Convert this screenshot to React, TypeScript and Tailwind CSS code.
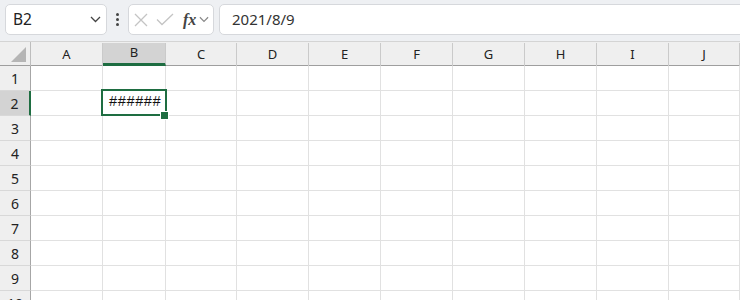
const COLS = ['A', 'B', 'C', 'D', 'E', 'F', 'G', 'H', 'I', 'J'] as const;
const ROWS = [1, 2, 3, 4, 5, 6, 7, 8, 9, 10];

const GRID = 'grid grid-cols-[31px_72px_63px_71px_72px_72px_72px_72px_72px_72px_1fr]';

function Chevron({ className }: { className?: string }) {
  return (
    <svg className={className} width="11" height="7" viewBox="0 0 11 7" fill="none" stroke="currentColor" strokeWidth="1.3">
      <path d="M1 1l4.5 4.5L10 1" />
    </svg>
  );
}

function Toolbar() {
  return (
    <div className="h-[42px] bg-[#eef0f3] border-b border-[#d4d4d4] flex items-start pt-[4px] pl-[5px]">
      <div className="w-[102px] h-[31px] bg-white border border-[#d6d8dc] rounded-[5px] flex items-center pl-[7px] pr-[5px]">
        <span className="flex-1 text-[15.5px] text-[#222] leading-none">B2</span>
        <Chevron className="text-[#444]" />
      </div>
      <div className="w-[21px] h-[31px] flex flex-col items-center justify-center gap-[2px]">
        <span className="w-[3px] h-[3px] bg-[#444] rounded-full" />
        <span className="w-[3px] h-[3px] bg-[#444] rounded-full" />
        <span className="w-[3px] h-[3px] bg-[#444] rounded-full" />
      </div>
      <div className="w-[86px] h-[31px] bg-white border border-[#d6d8dc] rounded-[5px] flex items-center pl-[5px]">
        <svg width="14" height="14" viewBox="0 0 14 14" stroke="#c4c4c4" strokeWidth="1.3" fill="none">
          <path d="M1 1l12 12M13 1L1 13" />
        </svg>
        <svg className="ml-[8px]" width="18" height="13" viewBox="0 0 18 13" stroke="#c4c4c4" strokeWidth="1.3" fill="none">
          <path d="M1 6.5l5 5L17 1" />
        </svg>
        <span className="ml-[9px] font-['Liberation_Serif',serif] italic font-bold text-[16px] text-[#444] leading-none">fx</span>
        <Chevron className="ml-[3px] text-[#888] w-[10px]" />
      </div>
      <div className="flex-1 -mr-[8px] ml-[5px] h-[31px] bg-white border border-[#d6d8dc] rounded-[5px] flex items-center pl-[12px]">
        <span className="text-[15px] text-[#333] leading-none">2021/8/9</span>
      </div>
    </div>
  );
}

function HeaderRow() {
  return (
    <div className={`${GRID} h-[24px] bg-[#efefef] border-b border-[#9e9e9e]`}>
      <div className="relative border-r border-[#bdbdbd]">
        <span className="absolute left-[11px] top-[5px] w-0 h-0 border-l-[15px] border-l-transparent border-b-[15px] border-b-[#b5b5b5]" />
      </div>
      {COLS.map((c) => (
        <div
          key={c}
          className={`flex items-center justify-center text-[13px] text-[#222] border-r border-[#cacaca] mt-[1px] ${
            c === 'B' ? 'bg-[#d3d3d3] border-b-[3px] border-b-[#1e6d41]' : ''
          }`}
        >
          {c}
        </div>
      ))}
    </div>
  );
}

function Row({ n }: { n: number }) {
  const sel = n === 2;
  return (
    <div className={`${GRID} h-[25px]`}>
      <div
        className={`flex items-center justify-center text-[14px] text-[#222] border-b border-[#d8d8d8] ${
          sel ? 'bg-[#d3d3d3] border-r-[2px] border-r-[#1e6d41]' : 'bg-[#efefef] border-r border-r-[#a6a6a6]'
        }`}
      >
        {n}
      </div>
      {COLS.map((c) => (
        <div key={c} className="relative border-r border-b border-[#e1e1e1]">
          {sel && c === 'B' && (
            <>
              <div className="absolute z-10 -left-[2px] -top-[2px] w-[66px] h-[27px] border-2 border-[#1e6d41]" />
              <div className="absolute z-20 left-[57px] top-[20px] w-[9px] h-[9px] bg-[#1e6d41] border border-white" />
              <span className="absolute right-[4px] top-0 h-full flex items-center font-['Liberation_Mono',monospace] text-[14.5px] text-[#111]">
                ######
              </span>
            </>
          )}
        </div>
      ))}
    </div>
  );
}

export default function App() {
  return (
    <div className="w-[740px] h-[300px] overflow-hidden bg-white font-['Noto_Sans','Open_Sans',sans-serif]">
      <Toolbar />
      <HeaderRow />
      {ROWS.map((n) => (
        <Row key={n} n={n} />
      ))}
    </div>
  );
}
